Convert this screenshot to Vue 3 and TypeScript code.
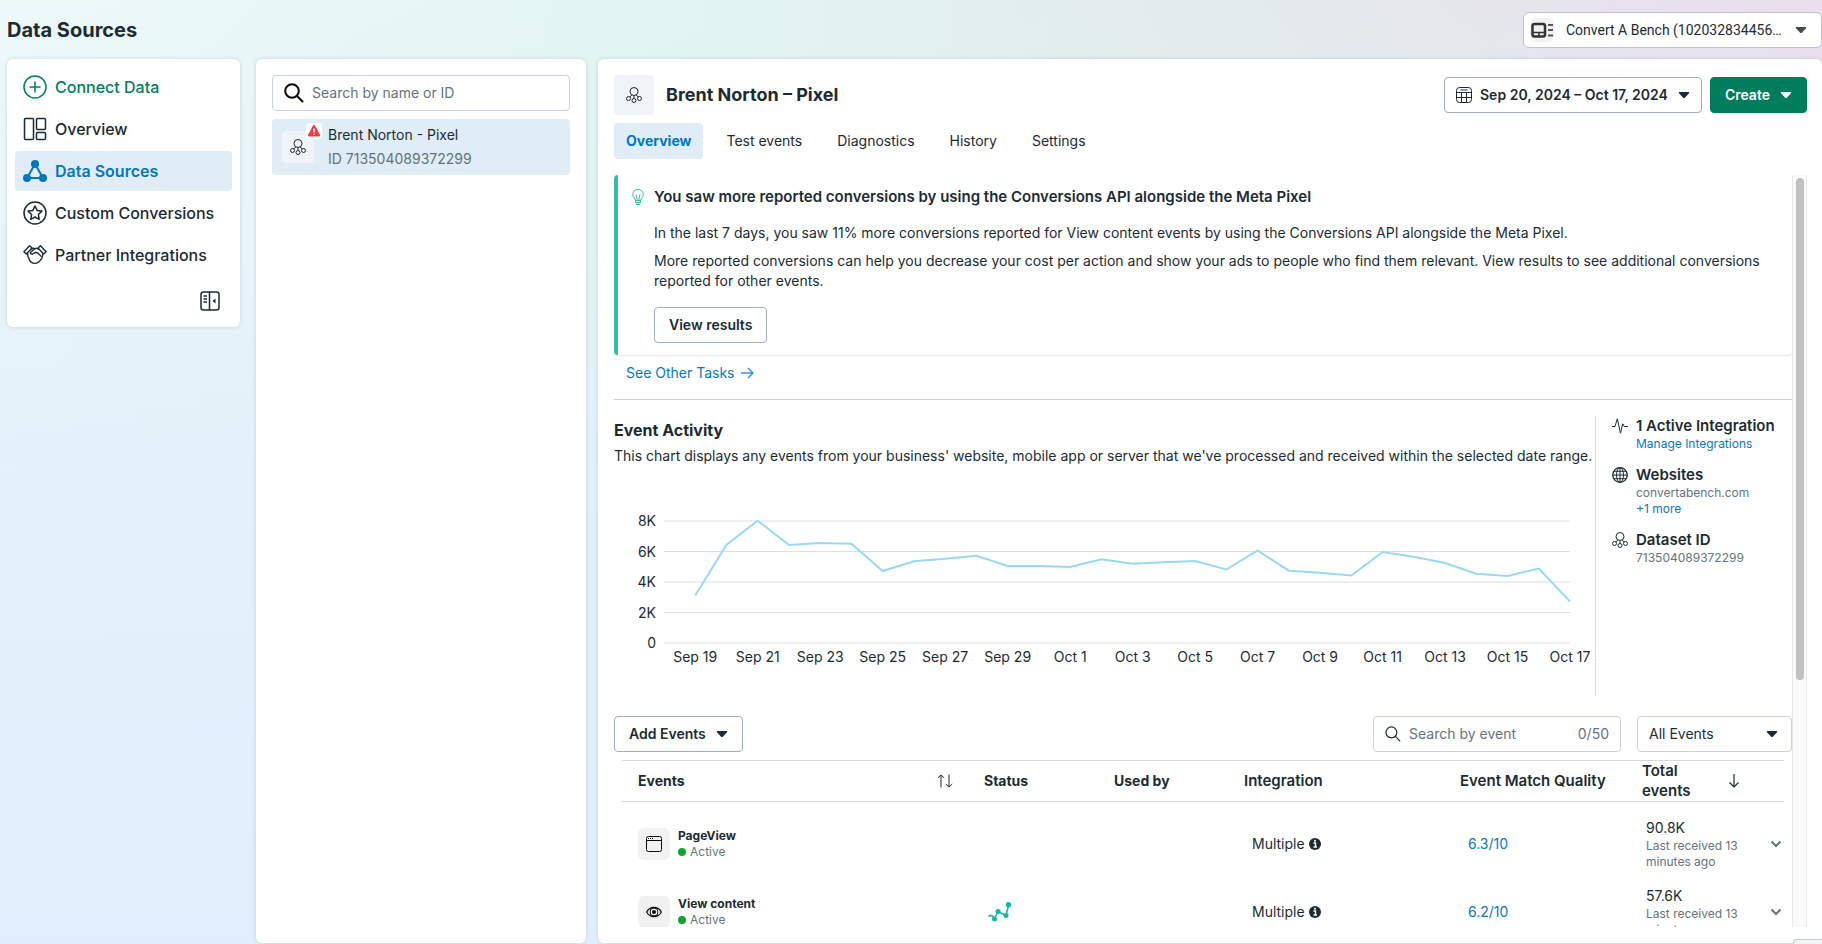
<script setup lang="ts">
import { computed, ref } from 'vue'

type NavIcon = 'plus' | 'layout' | 'graph' | 'star' | 'handshake'
interface NavItem { label: string; icon: NavIcon; tone?: 'green' | 'active' }
interface EventRow { name: string; icon: 'window' | 'eye'; trending: boolean; quality: string; total: string }

const navItems: NavItem[] = [
  { label: 'Connect Data', icon: 'plus', tone: 'green' },
  { label: 'Overview', icon: 'layout' },
  { label: 'Data Sources', icon: 'graph', tone: 'active' },
  { label: 'Custom Conversions', icon: 'star' },
  { label: 'Partner Integrations', icon: 'handshake' },
]

const tabs = ['Overview', 'Test events', 'Diagnostics', 'History', 'Settings']
const activeTab = ref('Overview')

const sourceQuery = ref('')
const eventQuery = ref('')
const eventFilter = ref('All Events')

const yLabels = ['8K', '6K', '4K', '2K', '0']
const xLabels = [
  'Sep 19', 'Sep 21', 'Sep 23', 'Sep 25', 'Sep 27', 'Sep 29', 'Oct 1', 'Oct 3',
  'Oct 5', 'Oct 7', 'Oct 9', 'Oct 11', 'Oct 13', 'Oct 15', 'Oct 17',
]
const daily = [
  3115, 6446, 8020, 6426, 6557, 6511, 4721, 5357, 5528, 5725, 5049, 5049, 4984, 5489, 5200,
  5292, 5377, 4820, 6066, 4741, 4610, 4426, 5967, 5659, 5246, 4544, 4393, 4885, 2721,
]
const chartMax = 8000
const linePoints = computed(() =>
  daily.map((v, i) => `${i * 2 + 2},${((1 - v / chartMax) * 100).toFixed(2)}`).join(' '),
)

const rows: EventRow[] = [
  { name: 'PageView', icon: 'window', trending: false, quality: '6.3/10', total: '90.8K' },
  { name: 'View content', icon: 'eye', trending: true, quality: '6.2/10', total: '57.6K' },
]
</script>

<template>
  <div class="page">
    <svg class="defs" aria-hidden="true">
      <symbol id="caret" viewBox="0 0 12 8">
        <path d="M1.6 1h8.8c.8 0 1.1.7.6 1.3L7.1 6.5a1.5 1.5 0 0 1-2.2 0L1 2.3C.5 1.7.8 1 1.6 1z" fill="currentColor" />
      </symbol>
      <symbol id="pixel" viewBox="0 0 16 16">
        <g fill="none" stroke="currentColor">
          <circle cx="8" cy="4.5" r="4" />
          <circle cx="2.5" cy="11.5" r="2" />
          <circle cx="8" cy="13.5" r="2" />
          <circle cx="13.5" cy="11.5" r="2" />
          <path d="M5.8 7.9L3.9 10M8 8.5v3M10.2 7.9l1.9 2.1" />
        </g>
      </symbol>
      <symbol id="search" viewBox="0 0 20 20">
        <g fill="none" stroke="currentColor" stroke-linecap="round">
          <circle cx="8" cy="8" r="6.8" />
          <path d="M13 13l5.500 5.500" />
        </g>
      </symbol>
    </svg>

    <header class="topbar">
      <h1>Data Sources</h1>
      <button class="account" type="button">
        <span class="account-icon">
          <svg width="24" height="24" viewBox="0 0 24 24">
            <rect x="2.5" y="6" width="12.5" height="12.5" rx="2" fill="none" stroke="#333" stroke-width="2.5" />
            <path d="M3 14.500h11.500M9 15v3" stroke="#333" stroke-width="1.5" />
            <path d="M18 7h5M18 12h5M18 17.500h5" stroke="#555" stroke-width="2" />
          </svg>
        </span>
        <span class="account-name">Convert A Bench (102032834456…</span>
        <svg class="caret" width="12" height="8"><use href="#caret" /></svg>
      </button>
    </header>

    <div class="columns">
      <aside class="card sidebar">
        <nav>
          <a v-for="item in navItems" :key="item.label" href="#" class="nav-item" :class="item.tone">
            <svg v-if="item.icon === 'plus'" width="24" height="24" viewBox="0 0 24 24" fill="none" stroke="currentColor" stroke-width="1.5">
              <circle cx="12" cy="12" r="11" /><path d="M12 6.500v11M6.500 12h11" />
            </svg>
            <svg v-else-if="item.icon === 'layout'" width="24" height="24" viewBox="0 0 24 24" fill="none" stroke="currentColor" stroke-width="1.5">
              <rect x="1.5" y="1.5" width="9" height="21" rx="1" />
              <rect x="13.5" y="1.5" width="9" height="11" rx="1" />
              <rect x="13.5" y="15.5" width="9" height="7" rx="1" />
            </svg>
            <svg v-else-if="item.icon === 'graph'" width="24" height="24" viewBox="0 0 24 24">
              <path d="M12 5L4 19h16z" fill="none" stroke="currentColor" stroke-width="2" />
              <circle cx="12" cy="5" r="4" fill="currentColor" />
              <circle cx="4" cy="19" r="4" fill="currentColor" />
              <circle cx="20" cy="19" r="4" fill="currentColor" />
            </svg>
            <svg v-else-if="item.icon === 'star'" width="24" height="24" viewBox="0 0 24 24" fill="none" stroke="currentColor" stroke-width="1.5" stroke-linejoin="round">
              <circle cx="12" cy="12" r="11" />
              <path d="M12 5l2.1 4.400 4.800.7-3.500 3.400.8 4.800-4.200-2.300-4.200 2.300.8-4.800-3.500-3.400 4.800-.7z" />
            </svg>
            <svg v-else width="24" height="24" viewBox="0 0 24 24" fill="none" stroke="currentColor" stroke-width="1.4" stroke-linejoin="round" stroke-linecap="round">
              <path d="M6.600 2.700L9 5 3.300 11 .9 8.700zM17.400 2.700L15 5l5.700 6 2.400-2.300z" />
              <path d="M8.700 6c1.200-.9 2.300-.9 3.300-.2 1.100-.7 2.200-.6 3.300.2M12 5.800L7.700 9.200c-.8 1 .7 2.500 2 1.700l2.800-1.600c2.500 0 3.700 2.100 5.500 4" />
              <path d="M4.800 10.800c-.4 1.500.2 3.200 1 4.400.8 3 3.300 5.200 6.200 5.200s4.700-2 6.200-4.200c1.200-1.500 1.700-3.300 1.500-5.200" />
            </svg>
            <span>{{ item.label }}</span>
          </a>
        </nav>
        <button class="collapse" type="button" aria-label="Collapse menu">
          <svg width="20" height="20" viewBox="0 0 20 20" fill="none" stroke="currentColor" stroke-width="1.5">
            <rect x="1" y="1" width="18" height="18" rx="2.5" />
            <path d="M9.500 1v18" />
            <path d="M3.500 5h3.500M3.500 8h3.500M3.500 11h3.500" />
            <path d="M15.500 7.500v5L12.500 10z" fill="currentColor" stroke="none" />
          </svg>
        </button>
      </aside>

      <section class="card sources" aria-label="Sources">
        <label class="field source-search">
          <svg width="20" height="20" stroke-width="2"><use href="#search" /></svg>
          <input v-model="sourceQuery" type="text" placeholder="Search by name or ID" aria-label="Search by name or ID" />
        </label>
        <a class="source" href="#">
          <span class="source-icon">
            <svg width="16" height="16"><use href="#pixel" /></svg>
            <span class="badge">
              <svg width="14" height="14" viewBox="0 0 14 14">
                <path d="M6 1.500a1.150 1.150 0 0 1 2 0l5 9.500a1.100 1.100 0 0 1-1 1.500H2A1.100 1.100 0 0 1 1 11z" fill="#fa383e" />
                <path d="M7 4.500v4M7 9.800v1.200" stroke="#fff" stroke-width="1.5" />
              </svg>
            </span>
          </span>
          <span class="source-text">
            <span>Brent Norton - Pixel</span>
            <span class="muted">ID 713504089372299</span>
          </span>
        </a>
      </section>

      <main class="card main">
        <div class="main-head">
          <span class="dataset-icon"><svg width="16" height="16"><use href="#pixel" /></svg></span>
          <h2>Brent Norton – Pixel</h2>
          <button class="btn" type="button">
            <svg width="16" height="16" viewBox="0 0 16 16" fill="none" stroke="currentColor">
              <rect x=".5" y=".5" width="15" height="15" rx="3" />
              <path d="M4.500 3h7M.5 5.500h15M.5 10.500h15M5.500 5.500v10M10.500 5.500v10" />
            </svg>
            <span>Sep 20, 2024 – Oct 17, 2024</span>
            <svg class="caret" width="12" height="8"><use href="#caret" /></svg>
          </button>
          <button class="btn primary" type="button">
            <span>Create</span>
            <svg class="caret" width="12" height="8"><use href="#caret" /></svg>
          </button>
        </div>

        <div class="tabs" role="tablist">
          <button
            v-for="tab in tabs" :key="tab" type="button" role="tab"
            :aria-selected="tab === activeTab" :class="{ on: tab === activeTab }" @click="activeTab = tab"
          >{{ tab }}</button>
        </div>

        <div class="scroller">
          <div class="content">
            <section class="banner">
              <svg class="bulb" width="12" height="16" viewBox="0 0 12 16" fill="none" stroke="currentColor">
                <path d="M3.500 11.500c0-2-2.800-2.800-2.800-6a5.300 5 0 0 1 10.600 0c0 3.200-2.800 4-2.800 6z" />
                <path d="M4 5.500L5.200 11M8 5.500L6.800 11M3.500 13.500h5M4 15.500h4M3.500 11.500v2.500M8.500 11.500v2.500" />
              </svg>
              <div class="banner-body">
                <h3>You saw more reported conversions by using the Conversions API alongside the Meta Pixel</h3>
                <p>In the last 7 days, you saw 11% more conversions reported for View content events by using the Conversions API alongside the Meta Pixel.</p>
                <p>More reported conversions can help you decrease your cost per action and show your ads to people who find them relevant. View results to see additional conversions reported for other events.</p>
                <button class="btn" type="button">View results</button>
              </div>
            </section>

            <a class="tasks" href="#">
              <span>See Other Tasks</span>
              <svg width="13" height="12" viewBox="0 0 13 12" fill="none" stroke="#3b8df0" stroke-width="1.5">
                <path d="M0 6h12M7 1l5 5-5 5" />
              </svg>
            </a>

            <section class="activity">
              <div class="activity-main">
                <h3>Event Activity</h3>
                <p>This chart displays any events from your business' website, mobile app or server that we've processed and received within the selected date range.</p>
                <div class="chart">
                  <div class="y-axis"><span v-for="y in yLabels" :key="y">{{ y }}</span></div>
                  <div class="plot">
                    <svg viewBox="0 0 58 100" preserveAspectRatio="none" role="img" aria-label="Daily events">
                      <path class="grid-line" d="M0 0H58M0 25H58M0 50H58M0 75H58M0 100H58" />
                      <polyline class="series" :points="linePoints" />
                    </svg>
                    <div class="x-axis"><span v-for="x in xLabels" :key="x">{{ x }}</span></div>
                  </div>
                </div>
              </div>
              <div class="facts">
                <div class="fact">
                  <svg width="16" height="16" viewBox="0 0 16 16" fill="none" stroke="currentColor" stroke-linejoin="round">
                    <path d="M0 8.500h3L5.300.8l3.200 14.400 2.200-9.400L12.300 8.500H16" />
                  </svg>
                  <div><h4>1 Active Integration</h4><a href="#">Manage Integrations</a></div>
                </div>
                <div class="fact">
                  <svg width="16" height="16" viewBox="0 0 16 16" fill="none" stroke="currentColor">
                    <circle cx="8" cy="8" r="7.3" stroke-width="1.3" /><ellipse cx="8" cy="8" rx="3.5" ry="7.3" />
                    <path d="M8 .7v14.600M.7 8h14.600M2 4.300h12M2 11.700h12" />
                  </svg>
                  <div><h4>Websites</h4><span class="muted">convertabench.com</span><a href="#">+1 more</a></div>
                </div>
                <div class="fact">
                  <svg width="16" height="16"><use href="#pixel" /></svg>
                  <div><h4>Dataset ID</h4><span class="muted">713504089372299</span></div>
                </div>
              </div>
            </section>

            <div class="toolbar">
              <button class="btn" type="button">
                <span>Add Events</span>
                <svg class="caret" width="12" height="8"><use href="#caret" /></svg>
              </button>
              <label class="field event-search">
                <svg width="16" height="16" stroke-width="1.5"><use href="#search" /></svg>
                <input v-model="eventQuery" type="text" maxlength="50" placeholder="Search by event" aria-label="Search by event" />
                <span class="muted">{{ eventQuery.length }}/50</span>
              </label>
              <div class="select">
                <select v-model="eventFilter" aria-label="Event filter"><option>All Events</option></select>
                <svg class="caret" width="12" height="8"><use href="#caret" /></svg>
              </div>
            </div>

            <table class="events">
              <colgroup>
                <col /><col class="c-narrow" /><col class="c-narrow" /><col class="c-integration" /><col class="c-quality" /><col class="c-total" />
              </colgroup>
              <thead>
                <tr>
                  <th>
                    <div class="th-row">
                      <span>Events</span>
                      <svg width="16" height="14" viewBox="0 0 16 14" fill="none" stroke="currentColor">
                        <path d="M4 13.500V1M.8 4L4 .9 7.200 4M12 .5V13M8.800 10l3.200 3.100 3.200-3.100" />
                      </svg>
                    </div>
                  </th>
                  <th>Status</th>
                  <th>Used by</th>
                  <th class="wide">Integration</th>
                  <th class="wide">Event Match Quality</th>
                  <th class="wide">
                    <div class="th-row total-head">
                      <span>Total<br />events</span>
                      <svg width="10" height="14" viewBox="0 0 10 14" fill="none" stroke="currentColor" stroke-width="1.2">
                        <path d="M5 0v13M.5 8.500L5 13l4.500-4.500" />
                      </svg>
                    </div>
                  </th>
                </tr>
              </thead>
              <tbody>
                <tr v-for="row in rows" :key="row.name">
                  <td class="event-cell">
                    <div class="event">
                      <span class="event-icon">
                        <svg v-if="row.icon === 'window'" width="16" height="16" viewBox="0 0 16 16" fill="none" stroke="currentColor">
                          <rect x=".5" y=".5" width="15" height="15" rx="2" /><path d="M.5 4.500h15M2 2.500h1M4 2.500h1M6 2.500h1" />
                        </svg>
                        <svg v-else width="16" height="16" viewBox="0 0 16 16" fill="none" stroke="currentColor">
                          <path d="M.6 8C2.300 5 4.800 3.300 8 3.300S13.700 5 15.400 8C13.700 11 11.200 12.700 8 12.700S2.300 11 .6 8z" stroke-width="1.2" />
                          <circle cx="8" cy="8" r="4" /><circle cx="8" cy="8" r="2" fill="currentColor" stroke="none" />
                        </svg>
                      </span>
                      <span class="event-text">
                        <b>{{ row.name }}</b>
                        <span class="state"><i class="dot"></i>Active</span>
                      </span>
                    </div>
                  </td>
                  <td>
                    <svg v-if="row.trending" class="trend" width="24" height="20" viewBox="0 0 24 20" fill="none" stroke="currentColor" stroke-width="1.5">
                      <path d="M.5 14.500Q3 11.500 6.500 16.500L10 9.500 18 13.500 20.500 3" />
                      <g fill="currentColor" stroke="none">
                        <circle cx="6.5" cy="17" r="2.5" /><circle cx="10" cy="9.5" r="2.5" /><circle cx="18" cy="13.5" r="2.5" /><circle cx="20.5" cy="2.8" r="2.7" />
                      </g>
                    </svg>
                  </td>
                  <td></td>
                  <td class="inset">
                    <span class="multi">Multiple
                      <svg width="12" height="12" viewBox="0 0 12 12">
                        <circle cx="6" cy="6" r="6" fill="currentColor" />
                        <path d="M4.500 5h2v4M4.500 9h3.500" fill="none" stroke="#fff" stroke-width="1.4" /><circle cx="6" cy="2.8" r="1" fill="#fff" />
                      </svg>
                    </span>
                  </td>
                  <td class="inset"><a href="#">{{ row.quality }}</a></td>
                  <td class="total-cell">
                    <div class="total">
                      <div><span>{{ row.total }}</span><small>Last received 13 minutes ago</small></div>
                      <button type="button" :aria-label="`Expand ${row.name}`">
                        <svg width="12" height="8" viewBox="0 0 12 8" fill="none" stroke="currentColor" stroke-width="2"><path d="M1.500 1.500L6 6l4.500-4.500" /></svg>
                      </button>
                    </div>
                  </td>
                </tr>
              </tbody>
            </table>
          </div>
          <div class="track" aria-hidden="true"><div class="thumb"></div></div>
        </div>
      </main>
    </div>
    <div class="status-corner" aria-hidden="true"></div>
  </div>
</template>

<style>
html, body { margin: 0; }
</style>

<style scoped>
* { box-sizing: border-box; }
.page {
  position: relative;
  display: flex;
  flex-direction: column;
  height: 100vh;
  overflow: hidden;
  color: #1c2b33;
  font: 400 14px/20px Inter, "Liberation Sans", sans-serif;
  background:
    linear-gradient(to bottom, transparent 0, rgba(226, 241, 251, .9) 50%, #e2eefd 100%),
    linear-gradient(to right, #edf9f9 0%, #e2f5f1 38%, #e3e9ea 72%, #eadfef 100%);
}
.defs { position: absolute; width: 0; height: 0; }
h1, h2, h3, h4, p { margin: 0; }
a { color: #0a78be; text-decoration: none; }
button, input, select { font: inherit; color: inherit; }
svg { flex: none; }
.muted { color: #65737b; }

.topbar { display: flex; align-items: center; justify-content: space-between; height: 59px; padding-left: 7px; flex: none; }
h1 { font-size: 20px; line-height: 24px; font-weight: 700; }
.account {
  display: flex; align-items: center; width: 299px; height: 36px; padding: 0 14px 0 6px;
  border: 1px solid #c4bfcb; border-radius: 6px; background: #fff; text-align: left;
  font-family: Roboto, sans-serif;
}
.account-icon { display: flex; width: 24px; height: 24px; border-radius: 6px; background: #f1f1f1; }
.account-name { flex: 1; padding-left: 12px; white-space: nowrap; }
.account .caret { color: #444950; }

.columns { display: flex; align-items: stretch; flex: 1; min-height: 0; padding: 0 0 1px 7px; }
.card { background: #fff; border-radius: 6px; box-shadow: 0 0 4px rgba(60, 90, 110, .2); }
.sidebar { align-self: flex-start; width: 233px; padding: 8px; margin-right: 16px; flex: none; }
nav { display: flex; flex-direction: column; gap: 2px; }
.nav-item {
  display: flex; align-items: center; gap: 8px; height: 40px; padding: 0 8px; border-radius: 4px;
  color: #1c2b33; font-size: 16px; font-weight: 500;
}
.nav-item.green { color: #00805c; }
.nav-item.active { color: #0078be; background: #e0ecf6; font-weight: 600; }
.collapse { display: flex; margin: 16px 12px 8px auto; padding: 0; border: 0; background: none; }

.sources { width: 330px; padding: 16px; margin-right: 12px; flex: none; }
.field {
  display: flex; align-items: center; gap: 8px; height: 36px; border: 1px solid #c9d2da; border-radius: 4px; background: #fff;
}
.field input { flex: 1; min-width: 0; padding: 0; border: 0; outline: 0; background: none; }
.field input::placeholder { color: #65737b; opacity: 1; }
.source-search { padding: 0 11px; color: #0a0a0a; }
.source { display: flex; align-items: center; gap: 14px; margin-top: 8px; padding: 4px 10px; border-radius: 4px; background: #e0ecf6; color: #1c2b33; }
.source-icon { position: relative; display: flex; align-items: center; justify-content: center; width: 32px; height: 32px; border-radius: 4px; background: #f0f3f7; }
.badge { position: absolute; top: -8px; right: -8px; display: flex; align-items: center; justify-content: center; width: 16px; height: 16px; border-radius: 4px; background: #fff; }
.source-text { display: flex; flex-direction: column; line-height: 24px; }

.main { display: flex; flex-direction: column; flex: 1; min-width: 0; padding: 16px 15px 16px 16px; }
.main-head { display: flex; align-items: center; gap: 8px; height: 40px; flex: none; }
.dataset-icon { display: flex; align-items: center; justify-content: center; width: 40px; height: 40px; border-radius: 4px; background: #f0f3f7; }
h2 { flex: 1; padding-left: 4px; font-size: 18px; line-height: 24px; font-weight: 700; }
.btn {
  display: inline-flex; align-items: center; justify-content: center; gap: 8px; height: 36px; padding: 0 14px;
  border: 1px solid #9fadbd; border-radius: 4px; background: #fff; font-weight: 600; white-space: nowrap;
}
.main-head .btn { padding: 0 11px; }
.btn .caret { margin-left: 2px; }
.main-head .primary { border-color: #007d5c; background: #007d5c; color: #fff; padding: 0 14px; }

.tabs { display: flex; gap: 11px; margin-top: 8px; flex: none; }
.tabs button { height: 36px; padding: 0 12px; border: 0; border-radius: 4px; background: none; }
.tabs .on { background: #e0ecf6; color: #0078be; font-weight: 700; }

.scroller { display: flex; flex: 1; min-height: 0; margin-top: 16px; }
.content { flex: 1; min-width: 0; overflow: hidden; }
.track { width: 15px; padding: 3px 3px 0; border: solid #e8e8e8; border-width: 0 1px; background: #fafafa; }
.thumb { width: 8px; height: 67%; border-radius: 4px; background: #c1c1c1; }

.banner {
  display: flex; gap: 10px; padding: 12px 16px 12px 14px; border-left: 4px solid #35bda4; border-radius: 4px;
  box-shadow: 0 1px 2px rgba(0, 0, 0, .12);
}
.bulb { margin-top: 2px; color: #35bda4; }
.banner h3 { font-size: 15px; line-height: 20px; font-weight: 600; }
.banner p { margin-top: 8px; }
.banner h3 + p { margin-top: 16px; }
.banner .btn { margin-top: 16px; }
.tasks { display: flex; align-items: center; gap: 6px; margin: 8px 0 16px; padding-left: 12px; }

.activity { display: flex; min-height: 297px; padding-top: 16px; border-top: 1px solid #cbd2d9; }
.activity-main { flex: 1; min-width: 0; padding-top: 4px; }
.activity h3 { font-size: 16px; line-height: 20px; font-weight: 700; }
.activity p { margin-top: 6px; white-space: nowrap; }
.chart { display: flex; gap: 8px; margin: 55px 25px 0 0; }
.y-axis { display: flex; flex-direction: column; justify-content: space-between; width: 42px; height: 142px; margin-top: -10px; text-align: right; }
.plot { flex: 1; min-width: 0; }
.plot svg { display: block; width: 100%; height: 122px; overflow: visible; }
.grid-line { fill: none; stroke: #dedfe1; stroke-width: 1; vector-effect: non-scaling-stroke; }
.series { fill: none; stroke: #99d9f7; stroke-width: 2; vector-effect: non-scaling-stroke; }
.x-axis { display: flex; width: calc(100% * 30 / 29); padding-top: 4px; }
.x-axis span { flex: 1 0 0; text-align: center; white-space: nowrap; }

.facts { display: flex; flex-direction: column; gap: 13px; width: 197px; padding-left: 16px; border-left: 1px solid #d5d9e0; }
.fact { display: flex; gap: 8px; font-size: 12px; line-height: 16px; }
.fact svg { margin-top: 2px; }
.fact div { display: flex; flex-direction: column; }
h4 { font-size: 15px; line-height: 20px; font-weight: 600; white-space: nowrap; }

.toolbar { display: flex; align-items: center; margin-top: 20px; }
.event-search { width: 248px; margin-left: auto; padding: 0 11px; }
.select { position: relative; width: 155px; height: 36px; margin-left: 16px; }
.select select { appearance: none; width: 100%; height: 100%; padding: 0 11px; border: 1px solid #c9d2da; border-radius: 4px; background: #fff; }
.select .caret { position: absolute; top: 14px; right: 14px; pointer-events: none; }

.events { width: calc(100% - 16px); margin: 8px 8px 0; border-collapse: separate; border-spacing: 0; table-layout: fixed; }
.c-narrow { width: 130px; }
.c-integration { width: 216px; }
.c-quality { width: 182px; }
.c-total { width: 158px; }
th { height: 42px; padding: 0 0 0 16px; border: solid #d5d9e0; border-width: 1px 0; text-align: left; font-weight: 700; white-space: nowrap; }
th.wide { font-size: 15px; font-weight: 600; }
.th-row { display: flex; align-items: center; justify-content: space-between; padding-right: 15px; }
.total-head { padding-right: 45px; }
td { height: 68px; padding: 0 0 0 20px; vertical-align: middle; }
tbody::before { content: ""; display: block; height: 8px; }
.event-cell { padding-left: 16px; }
.inset { padding-left: 24px; }
.event { display: flex; align-items: center; gap: 8px; font-size: 12px; line-height: 16px; }
.event-icon { display: flex; align-items: center; justify-content: center; width: 32px; height: 32px; border-radius: 6px; background: #f1f1f1; color: #0a0a0a; }
.event-text { display: flex; flex-direction: column; }
.state { display: flex; align-items: center; gap: 4px; color: #65737b; }
.dot { width: 8px; height: 8px; border-radius: 50%; background: #0ca82c; }
.trend { display: block; color: #14b8a0; }
.multi { display: flex; align-items: center; gap: 4px; }
.total { display: flex; align-items: center; justify-content: space-between; padding-right: 2px; }
.total div { display: flex; flex-direction: column; width: 96px; }
.total small { font-size: 12px; line-height: 16px; color: #65737b; }
.total button { display: flex; padding: 0; border: 0; background: none; color: #65737b; }
.status-corner { position: absolute; right: 0; bottom: 0; width: 29px; height: 5px; border: solid #c3c8cc; border-width: 1px 0 0 1px; border-radius: 4px 0 0; background: #f3f4f5; }
</style>
